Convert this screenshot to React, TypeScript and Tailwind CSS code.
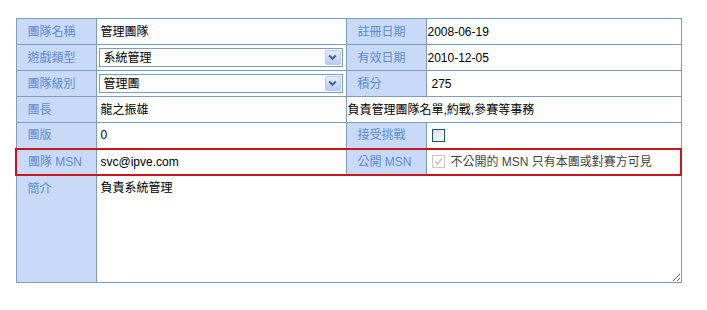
import { useState } from "react";

const font = "font-['Liberation_Sans','Noto_Sans_CJK_TC',sans-serif]";
const labelCls = "h-[26px] border border-[#7f9db9] bg-[#c9daf8] pl-[11px] text-left align-middle text-[12px] font-normal text-[#5f8ad3]";
const valueCls = "h-[26px] border border-[#7f9db9] bg-white px-[4px] align-middle text-[12px] text-black";

function FakeSelect({ value }: { value: string }) {
  return (
    <div className="flex h-[19px] w-[244px] items-center justify-between border border-[#7f9db9] bg-white pl-[4px] pr-[1px]">
      <span className="text-[12px] leading-none">{value}</span>
      <span className="flex h-[15px] w-[16px] items-center justify-center rounded-[2px] border border-[#b8cbf2] bg-gradient-to-b from-[#e3ecfd] to-[#b6cdf8]">
        <svg width="9" height="7" viewBox="0 0 9 7">
          <path d="M1.2 1.5 L4.5 4.8 L7.8 1.5" stroke="#4d6185" strokeWidth="2" fill="none" />
        </svg>
      </span>
    </div>
  );
}

export default function App() {
  const [intro, setIntro] = useState("負責系統管理");

  const msnEdge = "border-y-2 border-y-[#c8161e]";

  return (
    <div className={`min-h-[310px] bg-white pl-[15px] pt-[18px] ${font}`}>
      <table className="w-[665px] table-fixed">
        <colgroup>
          <col className="w-[80px]" />
          <col className="w-[250px]" />
          <col className="w-[80px]" />
          <col className="w-[255px]" />
        </colgroup>
        <tbody>
          <tr>
            <th className={labelCls}>團隊名稱</th>
            <td className={valueCls}>管理團隊</td>
            <th className={labelCls}>註冊日期</th>
            <td className={`${valueCls} !px-[1px]`}>2008-06-19</td>
          </tr>
          <tr>
            <th className={labelCls}>遊戲類型</th>
            <td className={`${valueCls} !px-[2px]`}>
              <FakeSelect value="系統管理" />
            </td>
            <th className={labelCls}>有效日期</th>
            <td className={`${valueCls} !px-[1px]`}>2010-12-05</td>
          </tr>
          <tr>
            <th className={labelCls}>團隊級別</th>
            <td className={`${valueCls} !px-[2px]`}>
              <FakeSelect value="管理團" />
            </td>
            <th className={labelCls}>積分</th>
            <td className={`${valueCls} !px-[5px]`}>275</td>
          </tr>
          <tr>
            <th className={labelCls}>團長</th>
            <td className={valueCls}>龍之振雄</td>
            <td colSpan={2} className={`${valueCls} !px-[1px]`}>
              負責管理團隊名單,約戰,參賽等事務
            </td>
          </tr>
          <tr>
            <th className={labelCls}>團版</th>
            <td className={valueCls}>0</td>
            <th className={labelCls}>接受挑戰</th>
            <td className={`${valueCls} !px-[5px]`}>
              <div className="h-[13px] w-[13px] border border-[#1c5180] bg-gradient-to-br from-[#dcdcd7] to-white" />
            </td>
          </tr>
          <tr>
            <th className={`${labelCls} ${msnEdge} border-l-2 border-l-[#c8161e]`}>團隊 MSN</th>
            <td className={`${valueCls} ${msnEdge}`}>svc@ipve.com</td>
            <th className={`${labelCls} ${msnEdge}`}>公開 MSN</th>
            <td className={`${valueCls} ${msnEdge} border-r-2 border-r-[#c8161e] !px-[5px]`}>
              <div className="flex items-center gap-[6px]">
                <span className="flex h-[13px] w-[13px] items-center justify-center border border-[#cac8bb] bg-white">
                  <svg width="9" height="9" viewBox="0 0 9 9">
                    <path d="M1 4.5 L3.5 7 L8 1.5" stroke="#c4c4c0" strokeWidth="1.6" fill="none" />
                  </svg>
                </span>
                <span className="text-[#444]">不公開的 MSN 只有本團或對賽方可見</span>
              </div>
            </td>
          </tr>
          <tr>
            <th className={`${labelCls} h-[108px] pt-[4px] align-top`}>簡介</th>
            <td colSpan={3} className="h-[108px] border border-[#7f9db9] bg-white p-0 align-top">
              <textarea
                value={intro}
                onChange={(e) => setIntro(e.target.value)}
                className={`block h-[106px] w-full resize bg-white px-[4px] pt-[3px] text-[12px] text-black outline-none ${font}`}
              />
            </td>
          </tr>
        </tbody>
      </table>
    </div>
  );
}
